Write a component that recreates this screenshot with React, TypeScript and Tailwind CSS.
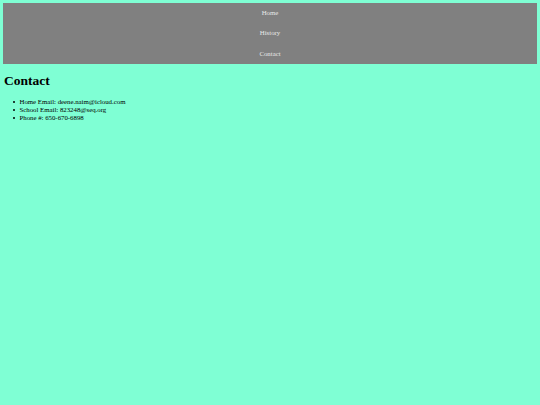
import React from 'react';

const links = ['Home', 'History', 'Contact'];

const contacts = [
  'Home Email: deene.naim@icloud.com',
  'School Email: 823248@seq.org',
  'Phone #: 650-670-6898',
];

export default function App() {
  return (
    <div className="min-h-[405px] bg-[#7fffd4] p-[3px] font-['Liberation_Serif',serif] text-black">
      <nav className="bg-[#808080]">
        {links.map((link) => (
          <a
            key={link}
            href="#"
            className="block h-[20.4px] text-center text-[6.8px] leading-[20.4px] text-[#e8e8e8]"
          >
            {link}
          </a>
        ))}
      </nav>
      <h2 className="mt-[9px] px-px text-[13.5px] font-bold leading-4">Contact</h2>
      <ul className="mt-[9px] pl-[9.5px] text-[6.8px] leading-[8px]">
        {contacts.map((c) => (
          <li key={c} className="flex items-center gap-[4.5px]">
            <span className="h-[2.5px] w-[2.5px] rounded-full bg-black" />
            <span>{c}</span>
          </li>
        ))}
      </ul>
    </div>
  );
}
